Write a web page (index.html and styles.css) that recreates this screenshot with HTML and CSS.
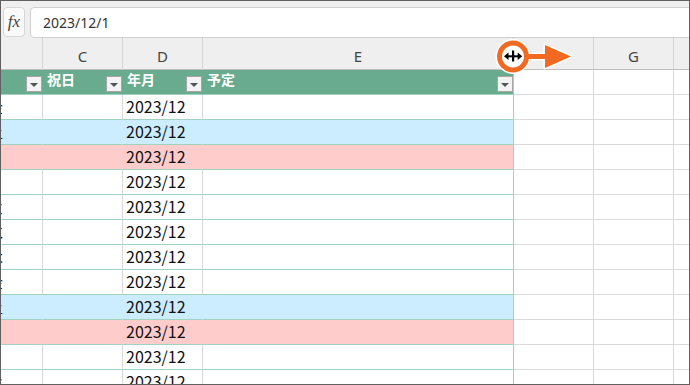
FILE: index.html
```html
<!DOCTYPE html>
<html lang="ja">
<head>
    <meta charset="UTF-8">
    <title>予定表</title>
    <link rel="stylesheet" href="styles.css">
</head>
<body>

<div class="frame">
    <div class="formula-bar">
        <div class="fx">fx</div>
        <div class="formula-input">2023/12/1</div>
    </div>

    <div class="sheet">
        <!-- column letters -->
        <div class="row col-head">
            <div class="cell w80"></div>
            <div class="cell w80">C</div>
            <div class="cell w80">D</div>
            <div class="cell w311">E</div>
            <div class="cell w80"></div>
            <div class="cell w80">G</div>
            <div class="cell w80"></div>
        </div>

        <!-- table header -->
        <div class="row table-head">
            <div class="cell w80"><span class="label"></span><span class="filter"></span></div>
            <div class="cell w80"><span class="label">祝日</span><span class="filter"></span></div>
            <div class="cell w80"><span class="label">年月</span><span class="filter"></span></div>
            <div class="cell w311 last"><span class="label">予定</span><span class="filter"></span></div>
            <div class="cell w80 out"></div>
            <div class="cell w80 out"></div>
            <div class="cell w80 out"></div>
        </div>

        <div class="row"><div class="cell w80 day">金</div><div class="cell w80"></div><div class="cell w80">2023/12</div><div class="cell w311 last"></div><div class="cell w80 out"></div><div class="cell w80 out"></div><div class="cell w80 out"></div></div>
        <div class="row sat"><div class="cell w80 day">土</div><div class="cell w80"></div><div class="cell w80">2023/12</div><div class="cell w311 last"></div><div class="cell w80 out"></div><div class="cell w80 out"></div><div class="cell w80 out"></div></div>
        <div class="row sun"><div class="cell w80 day">日</div><div class="cell w80"></div><div class="cell w80">2023/12</div><div class="cell w311 last"></div><div class="cell w80 out"></div><div class="cell w80 out"></div><div class="cell w80 out"></div></div>
        <div class="row"><div class="cell w80 day">月</div><div class="cell w80"></div><div class="cell w80">2023/12</div><div class="cell w311 last"></div><div class="cell w80 out"></div><div class="cell w80 out"></div><div class="cell w80 out"></div></div>
        <div class="row"><div class="cell w80 day">火</div><div class="cell w80"></div><div class="cell w80">2023/12</div><div class="cell w311 last"></div><div class="cell w80 out"></div><div class="cell w80 out"></div><div class="cell w80 out"></div></div>
        <div class="row"><div class="cell w80 day">水</div><div class="cell w80"></div><div class="cell w80">2023/12</div><div class="cell w311 last"></div><div class="cell w80 out"></div><div class="cell w80 out"></div><div class="cell w80 out"></div></div>
        <div class="row"><div class="cell w80 day">木</div><div class="cell w80"></div><div class="cell w80">2023/12</div><div class="cell w311 last"></div><div class="cell w80 out"></div><div class="cell w80 out"></div><div class="cell w80 out"></div></div>
        <div class="row"><div class="cell w80 day">金</div><div class="cell w80"></div><div class="cell w80">2023/12</div><div class="cell w311 last"></div><div class="cell w80 out"></div><div class="cell w80 out"></div><div class="cell w80 out"></div></div>
        <div class="row sat"><div class="cell w80 day">土</div><div class="cell w80"></div><div class="cell w80">2023/12</div><div class="cell w311 last"></div><div class="cell w80 out"></div><div class="cell w80 out"></div><div class="cell w80 out"></div></div>
        <div class="row sun"><div class="cell w80 day">日</div><div class="cell w80"></div><div class="cell w80">2023/12</div><div class="cell w311 last"></div><div class="cell w80 out"></div><div class="cell w80 out"></div><div class="cell w80 out"></div></div>
        <div class="row"><div class="cell w80 day">月</div><div class="cell w80"></div><div class="cell w80">2023/12</div><div class="cell w311 last"></div><div class="cell w80 out"></div><div class="cell w80 out"></div><div class="cell w80 out"></div></div>
        <div class="row"><div class="cell w80 day">火</div><div class="cell w80"></div><div class="cell w80">2023/12</div><div class="cell w311 last"></div><div class="cell w80 out"></div><div class="cell w80 out"></div><div class="cell w80 out"></div></div>
    </div>

    <!-- column resize hint over the E/F border -->
    <svg class="resize-mark" width="100" height="50" viewBox="0 0 100 50">
        <g fill="#fff" stroke="#fff" stroke-width="3" stroke-linejoin="round">
            <rect x="48" y="24" width="20" height="5"/>
            <polygon points="65,15 91,26.5 65,38"/>
        </g>
        <circle cx="33" cy="26.5" r="13.5" fill="#fff" stroke="#fff" stroke-width="8"/>
        <circle cx="33" cy="26.5" r="13.5" fill="#fff" stroke="#f26a22" stroke-width="5"/>
        <rect x="47" y="24" width="21" height="5" fill="#f26a22"/>
        <polygon points="65,15 91,26.5 65,38" fill="#f26a22"/>
        <g fill="#000">
            <rect x="32" y="20.5" width="2.2" height="11"/>
            <rect x="27" y="25.3" width="12" height="2"/>
            <polygon points="24,26.3 28.5,22.5 28.5,30.1"/>
            <polygon points="42.2,26.3 37.7,22.5 37.7,30.1"/>
        </g>
    </svg>
</div>

</body>
</html>
```

FILE: styles.css
```css
body {
    margin: 0;
    background-color: white;
    font-family: "Noto Sans", "Noto Sans CJK JP", sans-serif;
}
.frame {
    position: relative;
    width: 690px;
    height: 385px;
    box-sizing: border-box;
    border: 1px solid #606060;
    overflow: hidden;
    background-color: white;
}

/* formula bar */
.formula-bar {
    display: flex;
    gap: 5px;
    height: 37px;
    box-sizing: border-box;
    padding: 6px 0 0 2px;
    background-color: #efefef;
}
.fx {
    width: 22px;
    height: 30px;
    box-sizing: border-box;
    border: 1px solid #d6d6d6;
    border-radius: 4px;
    background-color: #fafafa;
    font-family: "Liberation Serif", serif;
    font-style: italic;
    font-size: 17px;
    color: #444;
    display: flex;
    justify-content: center;
    align-items: center;
}
.formula-input {
    flex: 1;
    height: 31px;
    margin-right: -10px;
    box-sizing: border-box;
    border: 1px solid #d0d0d0;
    border-radius: 4px;
    background-color: white;
    padding-left: 12px;
    font-size: 14px;
    color: #333;
    display: flex;
    align-items: center;
}

/* sheet grid */
.sheet {
    margin-left: -38px;
}
.row {
    display: flex;
    height: 25px;
}
.cell {
    flex: none;
    box-sizing: border-box;
    height: 100%;
    border-right: 1px solid #dadada;
    border-bottom: 1px solid #a0d2bf;
    padding: 0 0 2px 3px;
    font-family: "Noto Sans CJK JP", sans-serif;
    font-size: 16px;
    color: #111;
    display: flex;
    align-items: center;
    white-space: nowrap;
}
.w80 { width: 80px; }
.w311 { width: 311px; }
.cell.last { border-right-color: #a0d2bf; }
.cell.out { border-bottom-color: #dadada; }
.day {
    justify-content: flex-end;
    padding-right: 39px;
    font-size: 15px;
}

.sat .cell:not(.out) { background-color: #ccedff; border-right-color: #ccedff; }
.sun .cell:not(.out) { background-color: #ffcccc; border-right-color: #ffcccc; }
.sat .cell.last, .sun .cell.last { border-right-color: #a0d2bf; }

/* column letters */
.col-head {
    height: 32px;
}
.col-head .cell {
    background-color: #efefef;
    border-right-color: #d4d4d4;
    border-bottom-color: #bdbdbd;
    justify-content: center;
    padding: 4px 0 0;
    font-family: "Noto Sans", sans-serif;
    font-size: 15px;
    color: #444;
}

/* table header */
.table-head .cell:not(.out) {
    background-color: #69ab8e;
    border-right-color: #69ab8e;
    justify-content: space-between;
    align-items: flex-start;
    padding: 0 0 0 4px;
}
.table-head .cell.last { border-right-color: #a0d2bf; }
.label {
    line-height: 19px;
    font-size: 14px;
    font-weight: bold;
    color: white;
}
.filter {
    align-self: flex-end;
    width: 16px;
    height: 16px;
    margin-bottom: 2px;
    box-sizing: border-box;
    border: 1px solid #a6a6a6;
    background-color: #f3f3f3;
    display: flex;
    justify-content: center;
    align-items: center;
}
.filter::after {
    content: "";
    border-left: 4px solid transparent;
    border-right: 4px solid transparent;
    border-top: 4px solid #555;
    margin-top: 1px;
}

.resize-mark {
    position: absolute;
    left: 479px;
    top: 29px;
}
```
